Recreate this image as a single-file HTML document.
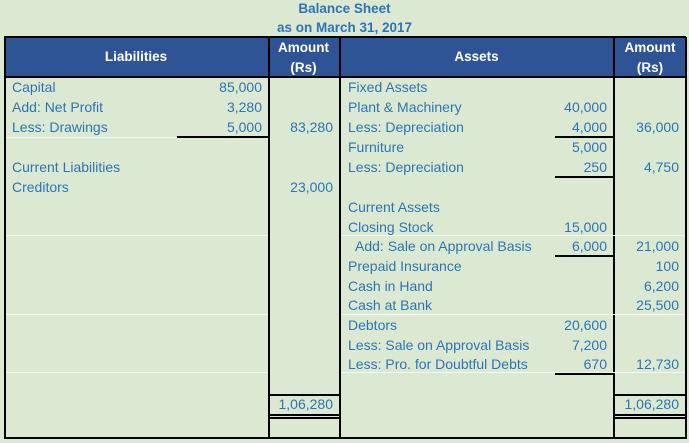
<!DOCTYPE html>
<html><head><meta charset="utf-8"><style>
body{margin:0;width:689px;height:443px;background:#dce9d2;position:relative;overflow:hidden;font-family:"Liberation Sans",sans-serif;font-size:14px;color:#2e74b5}
.t{position:absolute;white-space:nowrap;line-height:17px}
.r{text-align:right}
.b{font-weight:bold;font-size:13.5px}
.v{position:absolute;top:37px;height:401px;width:2px;background:#000}
.h{position:absolute;height:1.5px;background:#000}
.w{position:absolute;height:1px;background:#f4f8f0}
.hd{position:absolute;top:37px;height:39px;background:#2f5496}
.ht{position:absolute;color:#fff;font-weight:bold;font-size:13.5px;text-align:center;line-height:20px}
</style></head><body>
<div class="t b" style="left:0;width:689px;text-align:center;top:0">Balance Sheet</div>
<div class="t b" style="left:0;width:689px;text-align:center;top:19px">as on March 31, 2017</div>
<div class="hd" style="left:4px;width:682px"></div>
<div class="ht" style="left:4px;width:264px;top:47px">Liabilities</div>
<div class="ht" style="left:268px;width:71px;top:38px">Amount<br>(Rs)</div>
<div class="ht" style="left:339px;width:275px;top:47px">Assets</div>
<div class="ht" style="left:614px;width:72px;top:38px">Amount<br>(Rs)</div>
<div class="h" style="left:4px;width:682px;top:36px"></div>
<div class="h" style="left:4px;width:682px;top:76px"></div>
<div class="v" style="left:4px"></div>
<div class="v" style="left:268px"></div>
<div class="v" style="left:339px"></div>
<div class="v" style="left:613px"></div>
<div class="v" style="left:685px"></div>
<div class="h" style="left:4px;width:683px;top:437px"></div>
<div class="w" style="left:6px;width:262px;top:235px"></div>
<div class="w" style="left:341px;width:344px;top:235px"></div>
<div class="w" style="left:6px;width:262px;top:314px"></div>
<div class="w" style="left:341px;width:344px;top:314px"></div>
<div class="w" style="left:6px;width:262px;top:372px"></div>
<div class="w" style="left:6px;width:262px;top:137px"></div>
<div class="w" style="left:341px;width:344px;top:372px"></div>
<div class="h" style="left:177px;width:91px;top:136px"></div>
<div class="h" style="left:555px;width:59px;top:136px"></div>
<div class="h" style="left:555px;width:59px;top:176px"></div>
<div class="h" style="left:555px;width:59px;top:255px"></div>
<div class="h" style="left:555px;width:59px;top:373px"></div>
<div class="h" style="left:268px;width:71px;top:394px"></div>
<div class="h" style="left:268px;width:71px;top:414px"></div>
<div class="h" style="left:268px;width:71px;top:417px"></div>
<div class="h" style="left:613px;width:73px;top:394px"></div>
<div class="h" style="left:613px;width:73px;top:414px"></div>
<div class="h" style="left:613px;width:73px;top:417px"></div>
<div class="t" style="left:12px;top:79px">Capital</div>
<div class="t" style="left:12px;top:99px">Add: Net Profit</div>
<div class="t" style="left:12px;top:119px">Less: Drawings</div>
<div class="t" style="left:12px;top:159px">Current Liabilities</div>
<div class="t" style="left:12px;top:179px">Creditors</div>
<div class="t r" style="right:427px;top:79px">85,000</div>
<div class="t r" style="right:427px;top:99px">3,280</div>
<div class="t r" style="right:427px;top:119px">5,000</div>
<div class="t r" style="right:356px;top:119px">83,280</div>
<div class="t r" style="right:356px;top:179px">23,000</div>
<div class="t r" style="right:356px;top:396px">1,06,280</div>
<div class="t" style="left:348px;top:79px">Fixed Assets</div>
<div class="t" style="left:348px;top:99px">Plant &amp; Machinery</div>
<div class="t" style="left:348px;top:119px">Less: Depreciation</div>
<div class="t" style="left:348px;top:139px">Furniture</div>
<div class="t" style="left:348px;top:159px">Less: Depreciation</div>
<div class="t" style="left:348px;top:199px">Current Assets</div>
<div class="t" style="left:348px;top:219px">Closing Stock</div>
<div class="t" style="left:355px;top:238px">Add: Sale on Approval Basis</div>
<div class="t" style="left:348px;top:258px">Prepaid Insurance</div>
<div class="t" style="left:348px;top:278px">Cash in Hand</div>
<div class="t" style="left:348px;top:297px">Cash at Bank</div>
<div class="t" style="left:348px;top:317px">Debtors</div>
<div class="t" style="left:348px;top:337px">Less: Sale on Approval Basis</div>
<div class="t" style="left:348px;top:356px">Less: Pro. for Doubtful Debts</div>
<div class="t r" style="right:82px;top:99px">40,000</div>
<div class="t r" style="right:82px;top:119px">4,000</div>
<div class="t r" style="right:82px;top:139px">5,000</div>
<div class="t r" style="right:82px;top:159px">250</div>
<div class="t r" style="right:82px;top:219px">15,000</div>
<div class="t r" style="right:82px;top:238px">6,000</div>
<div class="t r" style="right:82px;top:317px">20,600</div>
<div class="t r" style="right:82px;top:337px">7,200</div>
<div class="t r" style="right:82px;top:356px">670</div>
<div class="t r" style="right:10px;top:119px">36,000</div>
<div class="t r" style="right:10px;top:159px">4,750</div>
<div class="t r" style="right:10px;top:238px">21,000</div>
<div class="t r" style="right:10px;top:258px">100</div>
<div class="t r" style="right:10px;top:278px">6,200</div>
<div class="t r" style="right:10px;top:297px">25,500</div>
<div class="t r" style="right:10px;top:356px">12,730</div>
<div class="t r" style="right:10px;top:396px">1,06,280</div>
</body></html>
